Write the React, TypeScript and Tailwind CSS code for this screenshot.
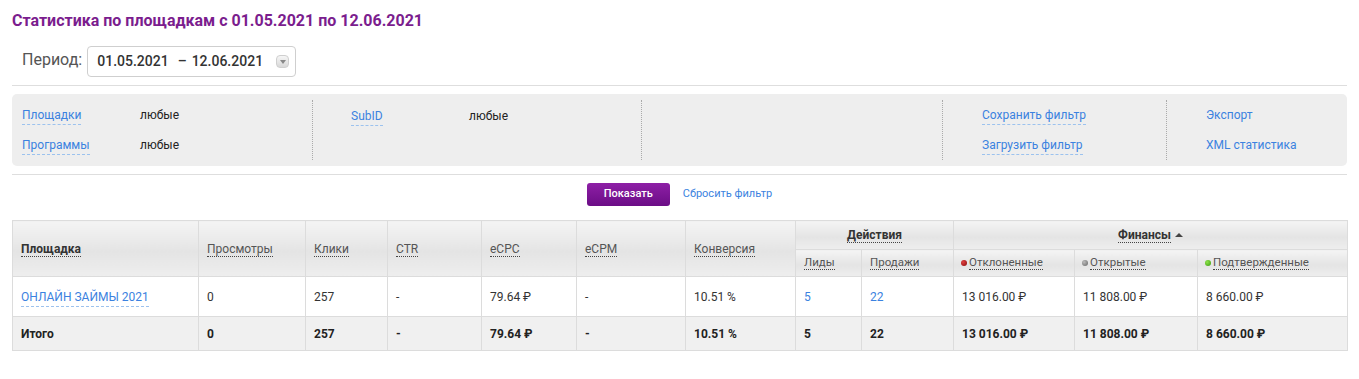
import React from 'react';

const hdrBg = 'bg-[linear-gradient(#f4f4f4,#e4e4e4_55%,#eeeeee)]';

const DotLink: React.FC<{ children: React.ReactNode; bold?: boolean }> = ({ children, bold }) => (
  <span className={`border-b border-dotted border-[#444] ${bold ? 'font-bold text-[#333]' : 'text-[#555]'}`}>{children}</span>
);

const FilterLink: React.FC<{ children: React.ReactNode; dashed?: boolean }> = ({ children, dashed = true }) => (
  <span className={`border-b border-dashed pb-[2px] text-[#3b82e0] ${dashed ? 'border-[#9cc2ee]' : 'border-transparent'}`}>{children}</span>
);

const App: React.FC = () => {
  const rows = [
    { name: 'ОНЛАЙН ЗАЙМЫ 2021', views: '0', clicks: '257', ctr: '-', ecpc: '79.64 ₽', ecpm: '-', conv: '10.51 %', leads: '5', sales: '22', rej: '13 016.00 ₽', open: '11 808.00 ₽', conf: '8 660.00 ₽' },
  ];

  const cell = 'border border-[#dcdcdc] px-2 text-left align-middle';

  return (
    <div className="min-h-screen bg-white px-3 text-[12px] text-[#333]" style={{ fontFamily: 'Roboto, "Liberation Sans", sans-serif' }}>
      <h1 className="pt-[11px] text-[16px] font-bold leading-[19px] text-[#7b1d8e]">Статистика по площадкам с 01.05.2021 по 12.06.2021</h1>

      <div className="mt-[16px] flex items-start pl-[10px]">
        <span className="mt-[4px] text-[16px] leading-[20px] text-[#555]">Период:</span>
        <div className="ml-[5px] flex h-[31px] w-[209px] items-center rounded-[4px] border border-[#cfcfcf] pl-[9px] pr-[6px] text-[14px] font-medium text-[#333]">
          <span>01.05.2021</span>
          <span className="ml-[9px] mr-[5px]">–</span>
          <span>12.06.2021</span>
          <span className="ml-auto flex h-[13px] w-[13px] items-center justify-center rounded-[4px] border border-[#cfcfcf] bg-[linear-gradient(#f6f6f6,#d8d8d8)]">
            <span className="mt-[1px] h-0 w-0 border-x-[3px] border-t-[4px] border-x-transparent border-t-[#888]" />
          </span>
        </div>
      </div>

      <div className="mt-[8px] border-t border-[#dedede]" />

      <div className="mt-[8px] flex h-[72px] rounded-[5px] bg-[#eeeeee] py-[6px]">
        <div className="flex w-[301px] flex-col justify-center gap-[12px] border-r border-dotted border-[#aaa] pl-[10px]">
          <div className="flex"><span className="w-[118px]"><FilterLink>Площадки</FilterLink></span><span className="text-[#222]">любые</span></div>
          <div className="flex"><span className="w-[118px]"><FilterLink>Программы</FilterLink></span><span className="text-[#222]">любые</span></div>
        </div>
        <div className="flex w-[329px] flex-col gap-[12px] border-r border-dotted border-[#aaa] pl-[38px] pt-[7px]">
          <div className="flex"><span className="w-[118px]"><FilterLink>SubID</FilterLink></span><span className="text-[#222]">любые</span></div>
        </div>
        <div className="w-[301px] border-r border-dotted border-[#aaa]" />
        <div className="flex w-[224px] flex-col justify-center gap-[12px] border-r border-dotted border-[#aaa] pl-[39px]">
          <div><FilterLink>Сохранить фильтр</FilterLink></div>
          <div><FilterLink>Загрузить фильтр</FilterLink></div>
        </div>
        <div className="flex flex-1 flex-col justify-center gap-[12px] pl-[39px]">
          <div><FilterLink dashed={false}>Экспорт</FilterLink></div>
          <div><FilterLink dashed={false}>XML статистика</FilterLink></div>
        </div>
      </div>

      <div className="mt-[8px] border-t border-[#dedede]" />

      <div className="mt-[8px] flex items-center justify-center gap-[13px]">
        <button className="h-[23px] w-[83px] rounded-[3px] bg-[linear-gradient(#8e1fa6,#6b0d86)] text-[11px] font-medium text-white">Показать</button>
        <span className="text-[11px] text-[#3b82e0]">Сбросить фильтр</span>
      </div>

      <table className="mt-[14px] w-[1335px] table-fixed border-collapse">
        <colgroup>
          <col className="w-[186px]" />
          <col className="w-[107px]" />
          <col className="w-[82px]" />
          <col className="w-[94px]" />
          <col className="w-[95px]" />
          <col className="w-[109px]" />
          <col className="w-[110px]" />
          <col className="w-[66px]" />
          <col className="w-[92px]" />
          <col className="w-[121px]" />
          <col className="w-[123px]" />
          <col className="w-[150px]" />
        </colgroup>
        <thead>
          <tr className="h-[29px]">
            <th rowSpan={2} className={`${cell} ${hdrBg} font-normal`}><DotLink bold>Площадка</DotLink></th>
            <th rowSpan={2} className={`${cell} ${hdrBg} font-normal`}><DotLink>Просмотры</DotLink></th>
            <th rowSpan={2} className={`${cell} ${hdrBg} font-normal`}><DotLink>Клики</DotLink></th>
            <th rowSpan={2} className={`${cell} ${hdrBg} font-normal`}><DotLink>CTR</DotLink></th>
            <th rowSpan={2} className={`${cell} ${hdrBg} font-normal`}><DotLink>eCPC</DotLink></th>
            <th rowSpan={2} className={`${cell} ${hdrBg} font-normal`}><DotLink>eCPM</DotLink></th>
            <th rowSpan={2} className={`${cell} ${hdrBg} font-normal`}><DotLink>Конверсия</DotLink></th>
            <th colSpan={2} className={`${cell} ${hdrBg} !text-center`}><DotLink bold>Действия</DotLink></th>
            <th colSpan={3} className={`${cell} ${hdrBg} !text-center`}>
              <DotLink bold>Финансы</DotLink>
              <span className="ml-[4px] inline-block h-0 w-0 -translate-y-[2px] border-x-[4px] border-b-[4px] border-x-transparent border-b-[#444]" />
            </th>
          </tr>
          <tr className="h-[27px] text-[11.5px]">
            <th className={`${cell} ${hdrBg} font-normal`}><DotLink>Лиды</DotLink></th>
            <th className={`${cell} ${hdrBg} font-normal`}><DotLink>Продажи</DotLink></th>
            <th className={`${cell} ${hdrBg} font-normal !pl-[7px]`}>
              <span className="mr-[2px] inline-block h-[6px] w-[6px] rounded-full bg-[radial-gradient(circle_at_35%_35%,#e04040,#8a0c0c)]" />
              <DotLink>Отклоненные</DotLink>
            </th>
            <th className={`${cell} ${hdrBg} font-normal !pl-[7px]`}>
              <span className="mr-[2px] inline-block h-[6px] w-[6px] rounded-full bg-[radial-gradient(circle_at_35%_35%,#bbb,#666)]" />
              <DotLink>Открытые</DotLink>
            </th>
            <th className={`${cell} ${hdrBg} font-normal !pl-[7px]`}>
              <span className="mr-[2px] inline-block h-[6px] w-[6px] rounded-full bg-[radial-gradient(circle_at_35%_35%,#8ee34a,#3a9a10)]" />
              <DotLink>Подтвержденные</DotLink>
            </th>
          </tr>
        </thead>
        <tbody>
          {rows.map((r) => (
            <tr key={r.name} className="h-[40px] bg-white text-[#333]">
              <td className={cell}><span className="border-b border-dashed border-[#9cc2ee] pb-[2px] text-[#3b82e0]">{r.name}</span></td>
              <td className={cell}>{r.views}</td>
              <td className={cell}>{r.clicks}</td>
              <td className={cell}>{r.ctr}</td>
              <td className={cell}>{r.ecpc}</td>
              <td className={cell}>{r.ecpm}</td>
              <td className={cell}>{r.conv}</td>
              <td className={`${cell} text-[#3b82e0]`}>{r.leads}</td>
              <td className={`${cell} text-[#3b82e0]`}>{r.sales}</td>
              <td className={cell}>{r.rej}</td>
              <td className={cell}>{r.open}</td>
              <td className={cell}>{r.conf}</td>
            </tr>
          ))}
          <tr className="h-[34px] bg-[#f0f0f0] font-bold text-[#222]">
            <td className={cell}>Итого</td>
            <td className={cell}>0</td>
            <td className={cell}>257</td>
            <td className={cell}>-</td>
            <td className={cell}>79.64 ₽</td>
            <td className={cell}>-</td>
            <td className={cell}>10.51 %</td>
            <td className={cell}>5</td>
            <td className={cell}>22</td>
            <td className={cell}>13 016.00 ₽</td>
            <td className={cell}>11 808.00 ₽</td>
            <td className={cell}>8 660.00 ₽</td>
          </tr>
        </tbody>
      </table>
    </div>
  );
};

export default App;
